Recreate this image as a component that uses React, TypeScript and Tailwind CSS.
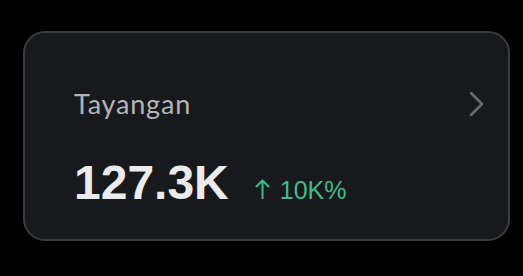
export default function App() {
  return (
    <div className="h-[276px] w-[523px] bg-black pl-[23px] pt-[31px]">
      <div className="flex h-[210px] w-[487px] flex-col rounded-[22px] border-2 border-[#3a3b3f] bg-[#18191d] pl-[49px] pr-[22px] pt-[54px]">
        <div className="flex h-[34px] items-center justify-between">
          <span className="font-['Lato',sans-serif] text-[27px] leading-[34px] tracking-[0.8px] text-[#b3b4b8]">
            Tayangan
          </span>
          <svg width="18" height="26" viewBox="0 0 18 26" fill="none">
            <path d="M3 2 L14 13 L3 24" stroke="#6a6b70" strokeWidth="2.5" strokeLinecap="round" strokeLinejoin="round" />
          </svg>
        </div>
        <div className="mt-[38px] flex items-baseline font-['Liberation_Sans',Arial,sans-serif]">
          <span className="text-[48px] font-bold leading-[48px] text-[#ebebed]">127.3K</span>
          <span className="ml-[26px] flex items-baseline text-[25px] leading-[30px] text-[#3dbd8b]">
            <svg width="15" height="20" viewBox="0 0 15 20" fill="none" className="mr-[10px]">
              <path d="M7.5 19.5 V1.5 M1.5 7.5 L7.5 1.5 L13.5 7.5" stroke="#3dbd8b" strokeWidth="2" strokeLinecap="round" strokeLinejoin="round" />
            </svg>
            10K%
          </span>
        </div>
      </div>
    </div>
  )
}
